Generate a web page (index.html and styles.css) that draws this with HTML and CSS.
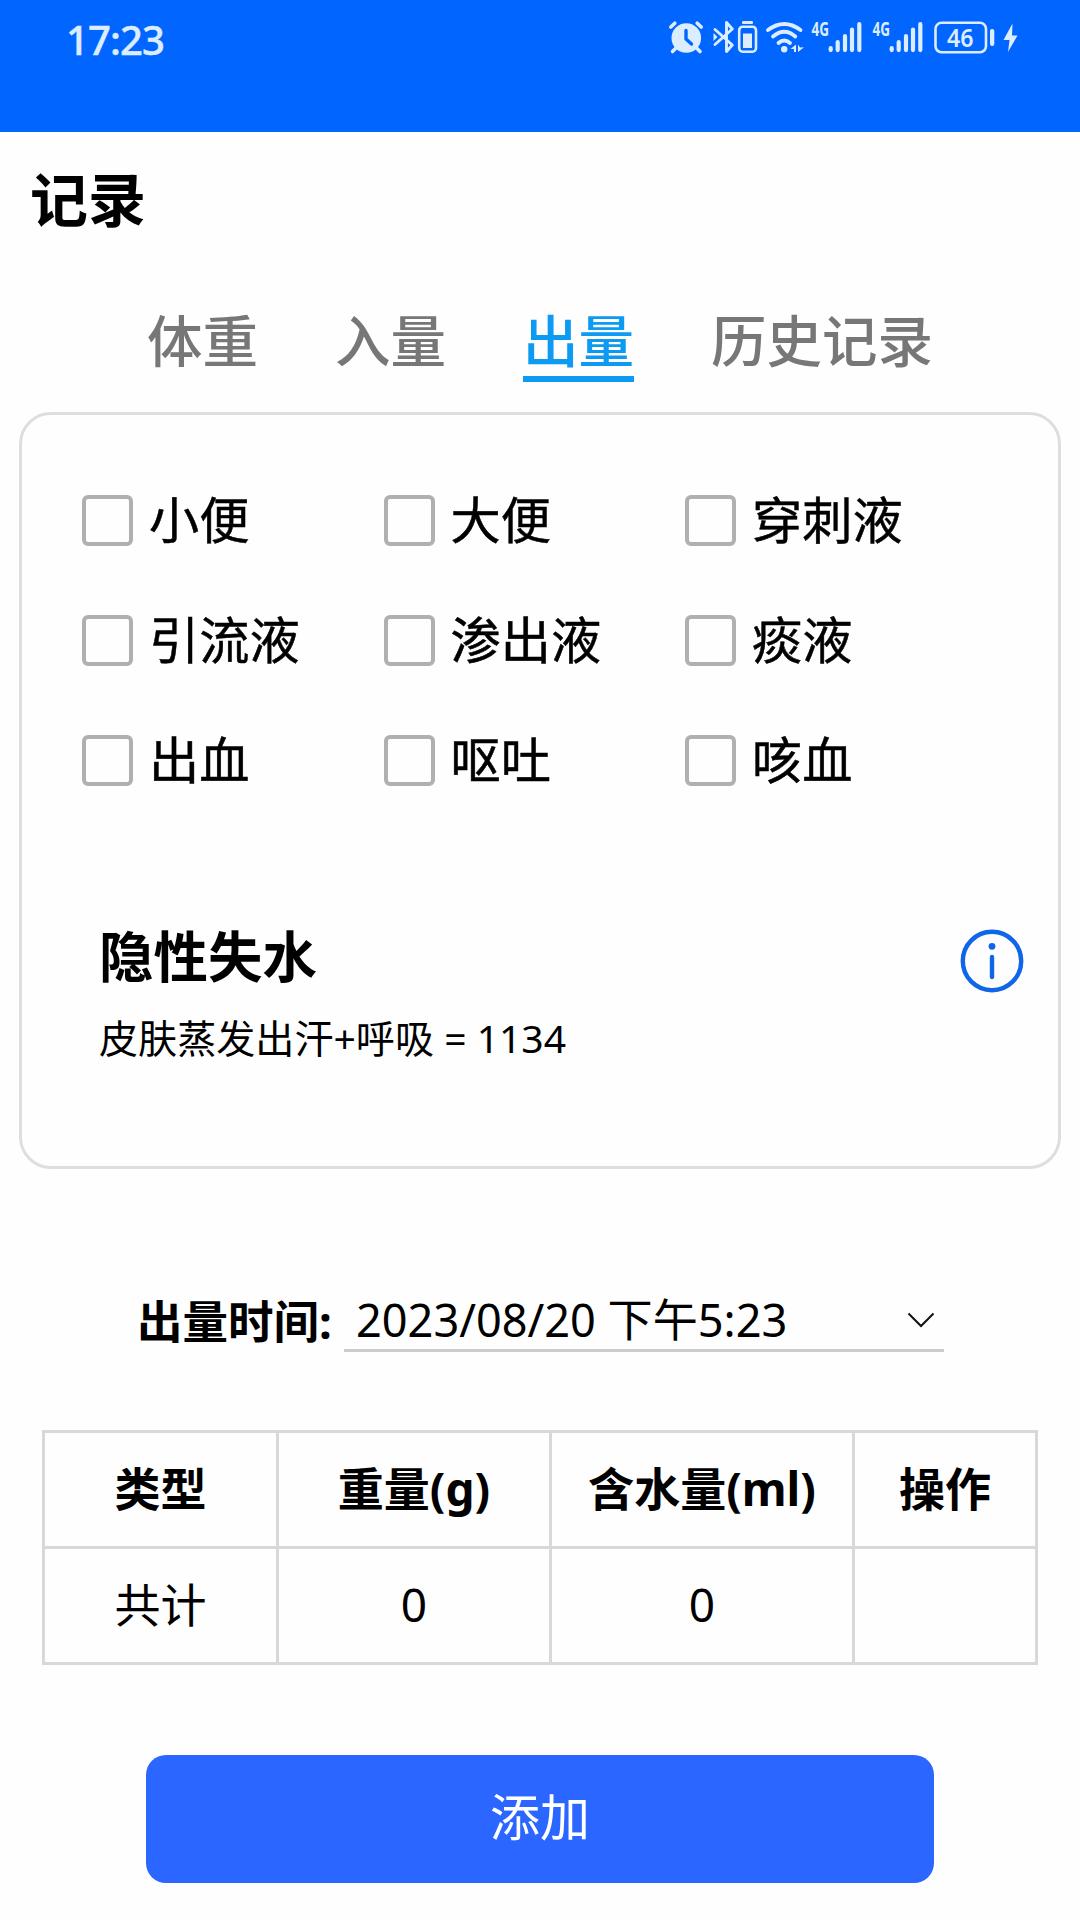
FILE: index.html
```html
<!DOCTYPE html>
<html lang="zh-CN">
<head>
<meta charset="utf-8">
<title>记录</title>
<link rel="stylesheet" href="styles.css">
</head>
<body>
<header class="statusbar">
  <span class="clock">17:23</span>
  <div class="status-icons">
    <svg class="ico alarm" viewBox="668 20 37 36" width="37" height="36">
      <circle cx="686.3" cy="38" r="14.8" fill="currentColor"/>
      <path d="M670.8 27l4-3.8M701.2 27l-4-3.8M676 48l-3.5 3.5M696.500 48l3.500 3.500" stroke="currentColor" stroke-width="3.600" stroke-linecap="round"/>
      <path d="M686 30.500v8.500l5.500 5" fill="none" stroke="#06f" stroke-width="3.400" stroke-linecap="round" stroke-linejoin="round"/>
    </svg>
    <svg class="ico" viewBox="712 20 23 36" width="23" height="36">
      <path d="M715 29.500L732.300 45L726.500 51.500V22.500L732.300 29L715 44.500" fill="none" stroke="currentColor" stroke-width="2.900" stroke-linejoin="round" stroke-linecap="round"/>
      <path d="M713.500 33l4 4l-4 4z" fill="currentColor"/>
    </svg>
    <svg class="ico bt-battery" viewBox="737 20 22 36" width="22" height="36">
      <rect x="739.200" y="26.700" width="16.800" height="25" rx="3.500" fill="none" stroke="currentColor" stroke-width="2.600"/>
      <rect x="742" y="21" width="11" height="3" rx="1.300" fill="currentColor"/>
      <rect x="743" y="33.500" width="9" height="14.500" fill="currentColor"/>
    </svg>
    <svg class="ico wifi" viewBox="765 20 40 36" width="40" height="36">
      <g fill="none" stroke="currentColor" stroke-width="3.800" stroke-linecap="round">
        <path d="M768 30Q784.300 18 800.500 30"/>
        <path d="M773 36.500Q784.300 27 795.300 36.500"/>
        <path d="M778.500 43Q784.200 38 790 43"/>
      </g>
      <circle cx="784.200" cy="49.300" r="3.200" fill="currentColor"/>
      <path d="M790.500 49l5.500-4.500v7.500h-2v-3zM798 44.500v7.500l6-4.700-4 .2z" fill="currentColor"/>
    </svg>
    <svg class="ico signal" viewBox="811 20 52 36" width="52" height="36">
      <text class="net" x="811.500" y="35.500" textLength="17.500" lengthAdjust="spacingAndGlyphs">4G</text>
      <path d="M830.700 48.200v1.900M837.700 42.200v7.900M845 36v14.100M852 29.500v20.600M859.300 24v26.100" stroke="currentColor" stroke-width="4.200" stroke-linecap="round"/>
    </svg>
    <svg class="ico signal" viewBox="811 20 52 36" width="52" height="36">
      <text class="net" x="811.500" y="35.500" textLength="17.500" lengthAdjust="spacingAndGlyphs">4G</text>
      <path d="M830.700 48.200v1.900M837.700 42.200v7.900M845 36v14.100M852 29.500v20.600M859.300 24v26.100" stroke="currentColor" stroke-width="4.200" stroke-linecap="round"/>
    </svg>
    <svg class="ico battery" viewBox="934 20 61 36" width="61" height="36">
      <rect x="935.500" y="22.800" width="50.500" height="29.500" rx="6" fill="none" stroke="currentColor" stroke-width="2.600"/>
      <rect x="990" y="29" width="4.300" height="17" rx="2" fill="currentColor"/>
      <text class="level" x="947" y="46.500" textLength="26.500" lengthAdjust="spacingAndGlyphs">46</text>
    </svg>
    <svg class="ico bolt" viewBox="1003 20 15 36" width="15" height="36">
      <path d="M1012.500 23.500L1003.500 40h6l-1.500 12L1017.500 35.500h-5.500z" fill="currentColor"/>
    </svg>
  </div>
</header>

<main>
  <h1 class="title">记录</h1>

  <nav class="tabs">
    <a class="tab">体重</a>
    <a class="tab">入量</a>
    <a class="tab active">出量</a>
    <a class="tab">历史记录</a>
  </nav>

  <section class="card">
    <div class="options">
      <label class="option"><span class="box"></span><span class="name">小便</span></label>
      <label class="option"><span class="box"></span><span class="name">大便</span></label>
      <label class="option"><span class="box"></span><span class="name">穿刺液</span></label>
      <label class="option"><span class="box"></span><span class="name">引流液</span></label>
      <label class="option"><span class="box"></span><span class="name">渗出液</span></label>
      <label class="option"><span class="box"></span><span class="name">痰液</span></label>
      <label class="option"><span class="box"></span><span class="name">出血</span></label>
      <label class="option"><span class="box"></span><span class="name">呕吐</span></label>
      <label class="option"><span class="box"></span><span class="name">咳血</span></label>
    </div>
    <div class="loss">
      <div>
        <h2 class="loss-title">隐性失水</h2>
        <p class="loss-text">皮肤蒸发出汗+呼吸 = 1134</p>
      </div>
      <svg class="info" viewBox="0 0 64 64" width="64" height="64">
        <circle cx="32" cy="32" r="29.200" fill="none" stroke="currentColor" stroke-width="4.400"/>
        <circle cx="32" cy="17.300" r="3.400" fill="currentColor"/>
        <path d="M32 28v20" stroke="currentColor" stroke-width="4.400" stroke-linecap="round"/>
      </svg>
    </div>
  </section>

  <div class="time-row">
    <span class="time-label">出量时间:</span>
    <div class="time-field">
      <span class="time-value">2023/08/20 下午5:23</span>
      <svg viewBox="0 0 28 16" width="28" height="16"><path d="M1.500 1.500L14 14L26.500 1.500" fill="none" stroke="#111" stroke-width="2"/></svg>
    </div>
  </div>

  <table class="totals">
    <colgroup><col class="c1"><col class="c2"><col class="c3"><col class="c4"></colgroup>
    <tr><th>类型</th><th>重量(g)</th><th>含水量(ml)</th><th>操作</th></tr>
    <tr><td>共计</td><td>0</td><td>0</td><td></td></tr>
  </table>

  <button class="add">添加</button>
</main>
</body>
</html>
```

FILE: styles.css
```css
* { box-sizing: border-box; margin: 0; padding: 0; }

body {
  width: 1080px;
  height: 1920px;
  overflow: hidden;
  background: #fefefe;
  color: #000;
  font-family: "Noto Sans", "Noto Sans CJK SC", sans-serif;
}

.statusbar {
  display: flex;
  justify-content: space-between;
  align-items: flex-start;
  height: 132px;
  padding: 20px 62px 0 66px;
  background: #06f;
  color: #dcedff;
}
.clock {
  font-size: 40px;
  font-weight: 500;
  line-height: 40px;
  letter-spacing: -0.9px;
  -webkit-text-stroke: 0.5px currentColor;
}
.status-icons { display: flex; }
.ico { display: block; flex: none; overflow: visible; }
.alarm { margin-right: 7px; }
.bt-battery { margin: 0 6px 0 2px; }
.wifi { margin-right: 6px; }
.signal { margin-right: 9px; }
.signal + .battery { margin-left: 1px; }
.battery { margin-right: 8px; }
.net { font-size: 19px; font-weight: 700; fill: currentColor; }
.level { font-size: 25px; font-weight: 600; fill: currentColor; }

.title {
  padding-left: 30px;
  margin-top: 28px;
  font-size: 58px;
  line-height: 80px;
  font-weight: 700;
}

.tabs {
  display: flex;
  justify-content: center;
  gap: 77px;
  margin-top: 62px;
}
.tab {
  height: 80px;
  font-size: 55.5px;
  line-height: 78px;
  font-weight: 500;
  color: #777;
}
.tab.active { color: #0c9af2; border-bottom: 6px solid #0c9af2; }

.card {
  width: 1042px;
  height: 757px;
  margin: 30px 0 0 19px;
  padding: 80px 34px 0 60px;
  border: 3px solid #dedede;
  border-radius: 32px;
}
.options {
  display: grid;
  grid-template-columns: repeat(3, 301.5px);
  row-gap: 69px;
}
.option {
  display: flex;
  align-items: center;
  gap: 16px;
  height: 51px;
  font-size: 50.2px;
  line-height: 51px;
  white-space: nowrap;
}
.name { padding-bottom: 3px; -webkit-text-stroke: 0.5px currentColor; }
.box {
  width: 51px;
  height: 51px;
  border: 4px solid #b0b0b0;
  border-radius: 6px;
}
.loss {
  display: flex;
  justify-content: space-between;
  align-items: flex-start;
  margin-top: 134px;
  padding-left: 17px;
}
.loss-title { font-size: 54.5px; line-height: 72px; font-weight: 700; }
.loss-text { margin-top: 16px; font-size: 39.1px; line-height: 60px; }
.info { margin-top: 9px; color: #1065e8; }

.time-row {
  display: flex;
  align-items: center;
  margin: 118px 0 0 137px;
  height: 65px;
}
.time-label { width: 207px; padding-top: 2px; font-size: 45.5px; font-weight: 700; line-height: 62px; }
.time-field {
  display: flex;
  align-items: center;
  justify-content: space-between;
  width: 600px;
  height: 65px;
  padding: 4px 9px 0 12px;
  border-bottom: 3px solid #ccc;
}
.time-value { font-size: 45.100px; line-height: 58px; }

.totals {
  width: 996px;
  margin: 78px 0 0 42px;
  border-collapse: collapse;
  table-layout: fixed;
  font-size: 46px;
  line-height: 62px;
  text-align: center;
}
.totals th, .totals td { height: 116px; padding-bottom: 3px; border: 3px solid #d8d8d8; }
.totals th { font-weight: 700; }
.c1 { width: 234px; }
.c2 { width: 273px; }
.c3 { width: 303px; }
.c4 { width: 183px; }

.add {
  display: block;
  width: 788px;
  height: 128px;
  margin: 90px 0 0 146px;
  padding-bottom: 3px;
  border: 0;
  border-radius: 20px;
  background: #2a66ff;
  color: #fff;
  font: 400 50px/125px "Noto Sans", "Noto Sans CJK SC", sans-serif;
}
```
